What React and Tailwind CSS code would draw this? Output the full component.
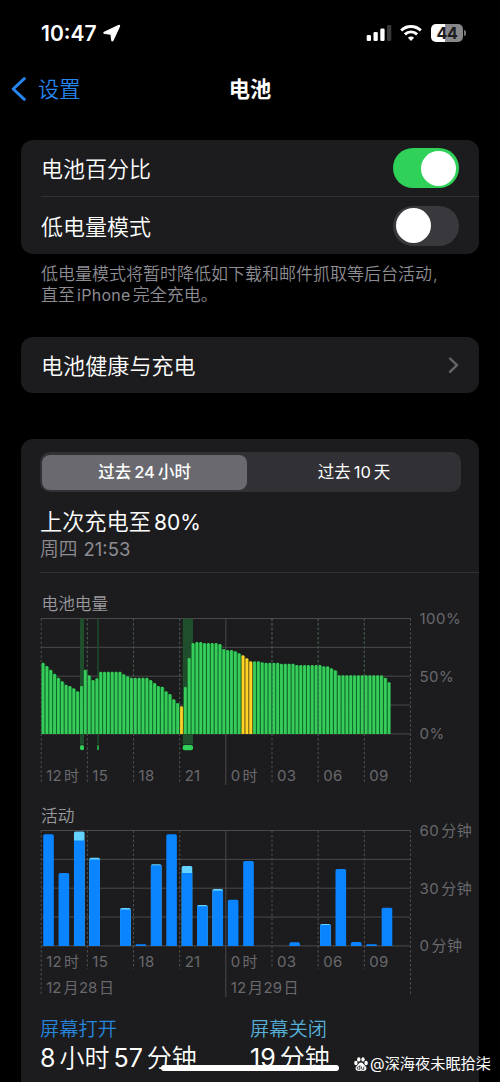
import React from "react";

const battery = [
  217, 227, 238, 250, 262, 273, 283, 287, 294, 303, 287, 238, 255, 269, 264, 244, 244, 244, 244, 244, 244, 252, 258,
  262, 262, 262, 262, 262, 269, 278, 287, 289, 303, 311, 327, 338, 348, 290, 203, 158, 155, 155, 158, 158, 158, 158,
  161, 176, 179, 179, 183, 189, 195, 204, 213, 213, 213, 216, 217, 217, 217, 217, 220, 220, 220, 220, 224, 224, 224,
  224, 224, 224, 224, 228, 228, 234, 240, 255, 255, 255, 255, 255, 255, 255, 255, 255, 255, 255, 255, 262, 276,
].map((v) => (431 - v) / 3);
const lowPower = [36, 52, 53, 54];

// [hour index, total height, height of the screen-off cap]
const activity = [
  [0, 111.7, 0], [1, 73, 0], [2, 114.5, 9], [3, 88.3, 1.8], [5, 38, 1.5], [6, 1.7, 0], [7, 81.7, 1], [8, 111.7, 0],
  [9, 80, 7], [10, 41, 1.2], [11, 57, 1.7], [12, 46.3, 0], [13, 85, 0], [16, 3.7, 0], [18, 22, 1], [19, 77, 0],
  [20, 4, 0], [21, 1.7, 0], [22, 38.3, 0],
];

const hours = ["12", "15", "18", "21", "0", "03", "06", "09"];
const STEP = 46.16;
const X0 = 20.2;

function Grid({ bottom, edge }) {
  return (
    <g>
      {[0, 1, 2, 3, 4].map((i) => (
        <line key={i} x1={X0} x2={X0 + 8 * STEP} y1={28.5 + i * 28.85} y2={28.5 + i * 28.85} stroke="#4a4a4c" strokeWidth="1" />
      ))}
      {[0, 1, 2, 3, 4, 5, 6, 7, 8].map((i) => (
        <line
          key={i}
          x1={X0 + i * STEP}
          x2={X0 + i * STEP}
          y1="28.5"
          y2={i === 4 ? edge + 2 : i % 8 === 0 ? edge : bottom}
          stroke={i === 4 ? "#4a4a4c" : "#525254"}
          strokeWidth="1"
          strokeDasharray={i === 4 ? undefined : "2.4 2.2"}
        />
      ))}
    </g>
  );
}

function Hours({ y }) {
  return hours.map((h, i) => (
    <text key={h} x={X0 + 5 + i * STEP} y={y} className="fill-[#69696d] text-[15px] font-normal tracking-[0.3px]">
      {h}
      {i % 4 === 0 && <tspan dx="2">时</tspan>}
    </text>
  ));
}

function BatteryChart() {
  return (
    <svg className="block h-[198px] w-[459px]" viewBox="0 0 459 198">
      <text x="20.5" y="19.5" className="fill-[#98989d] text-[16.7px]">电池电量</text>
      <Grid bottom={193} edge={193} />
      {[[59, 4], [76.3, 1.4], [161.7, 10.3]].map(([x, w]) => (
        <g key={x}>
          <rect x={x} y="28.5" width={w} height="126" fill="#1f4e2c" />
          <rect x={x} y="155" width={w} height="5.3" rx={Math.min(w / 2, 2)} fill="#30d158" />
        </g>
      ))}
      {battery.map((h, i) => {
        const low = lowPower.includes(i);
        return (
          <g key={i}>
            <rect x={20.5 + i * 3.846} y={144 - h + 1} width={i === 90 ? 2.5 : 3.9} height={h - 1} fill={low ? "#6e5a12" : "#0c6a29"} />
            <path
              d={`M${20.6 + i * 3.846} 144v${-h + 1}q0 -1 1 -1h.8q1 0 1 1v${h - 1}z`}
              fill={low ? "#ffd426" : "#38cd5b"}
            />
          </g>
        );
      })}
      {[1, 2, 3, 5, 6, 7].map((i) => (
        <line key={i} x1={X0 + i * STEP} x2={X0 + i * STEP} y1="28.5" y2="144" stroke="#3d5b45" strokeWidth="0.8" strokeDasharray="2.4 2.2" />
      ))}
      <Hours y={190.5} />
      {["100%", "50%", "0%"].map((t, i) => (
        <text key={t} x="398.5" y={34 + i * 57.7} className="fill-[#69696d] text-[15px] font-normal tracking-[0.5px]">{t}</text>
      ))}
    </svg>
  );
}

function ActivityChart() {
  return (
    <svg className="block h-[212px] w-[459px]" viewBox="0 0 459 212">
      <text x="20" y="19.5" className="fill-[#98989d] text-[16.7px]">活动</text>
      <g>
        <Grid bottom={167} edge={193} />
        {activity.map(([i, h, cap]) => {
          const x = 22.2 + i * 15.385;
          const r = Math.min(1.6, h / 2);
          return (
            <g key={i}>
              <path d={`M${x} 144v${-h + r}q0 ${-r} ${r} ${-r}h${10.6 - 2 * r}q${r} 0 ${r} ${r}v${h - r}z`} fill={cap ? "#64d2ff" : "#0a84ff"} />
              {cap > 0 && <rect x={x} y={144 - h + cap} width="10.6" height={h - cap} fill="#0a84ff" />}
            </g>
          );
        })}
      </g>
      <Hours y={165} />
      {["28", "29"].map((d, i) => (
        <text key={d} x={X0 + 5 + i * 4 * STEP} y="191" className="fill-[#69696d] text-[15px] font-normal">
          12<tspan dx="2">月</tspan><tspan dx="0.5">{d}</tspan><tspan dx="1.5">日</tspan>
        </text>
      ))}
      {["60", "30", "0"].map((t, i) => (
        <text key={t} x="398.5" y={34 + i * 57.7} className="fill-[#69696d] text-[15px] font-normal tracking-[0.5px]">
          {t}<tspan dx="2">分钟</tspan>
        </text>
      ))}
    </svg>
  );
}

function Switch({ on }) {
  return (
    <div className={on ? "flex h-10 w-[66px] items-center justify-end rounded-full bg-[#30d158] px-[3px]" : "flex h-10 w-[66px] items-center rounded-full bg-[#39393d] px-[3px]"}>
      <div className="size-[35px] rounded-full bg-white" />
    </div>
  );
}

export default function App() {
  return (
    <div className="relative h-[1082px] w-[500px] overflow-hidden bg-black font-['Inter','Noto_Sans_CJK_SC',sans-serif] font-[350] text-white">
      <header className="flex h-[66px] items-center pl-[41px] pr-[34px]">
        <span className="pt-px text-[21px] font-semibold">10:47</span>
        <svg className="ml-[6px] size-[18px]" viewBox="0 0 18 18">
          <path d="M1.300 8.200 15.500 1.500Q17 1 16.400 2.500L9.900 16.400Q9.100 17.600 8.800 16.100L8 10.200 1.600 9.500Q.2 9 1.300 8.200z" fill="#fff" stroke="#fff" strokeWidth="1.200" strokeLinejoin="round" />
        </svg>
        <svg className="ml-auto h-4 w-[26px]" viewBox="0 0 26 16">
          <rect x="0.700" y="10" width="4.300" height="6" rx="1.300" fill="#fff" />
          <rect x="7.500" y="7" width="4.300" height="9" rx="1.300" fill="#fff" />
          <rect x="14.300" y="3.500" width="4.300" height="12.500" rx="1.300" fill="#fff" />
          <rect x="21" y="0" width="4.300" height="16" rx="1.300" fill="#38383a" />
        </svg>
        <svg className="ml-[8px] h-4 w-[22px]" viewBox="0 0 22 16" fill="none" stroke="#fff" strokeWidth="2.900">
          <path d="M1.200 5.500C6.600.1 15.400.1 20.800 5.500" />
          <path d="M4.900 9.400c3.400-3.400 8.800-3.400 12.200 0" />
          <path d="M7.900 12.700c1.700-1.700 4.500-1.700 6.200 0L11 15.900z" fill="#fff" stroke="none" />
        </svg>
        <div className="ml-[9px] flex h-[18px] w-8 items-center justify-center rounded-[5px] bg-linear-to-r from-white from-44% to-[#88888a] to-44% text-[16px] font-bold leading-none tracking-[-0.3px] text-[#1c1c1e]">44</div>
        <div className="ml-px h-[6px] w-[2px] rounded-r-full bg-[#77777a]" />
      </header>

      <nav className="grid h-[46px] grid-cols-3 items-center px-[11px]">
        <div className="flex items-center gap-[12px] text-[21.2px] leading-none text-[#2685ee]">
          <svg className="h-6 w-[15px]" viewBox="0 0 15 24" fill="none" stroke="#2685ee" strokeWidth="3" strokeLinecap="round" strokeLinejoin="round">
            <path d="M13.300 1.700 2.200 12l11.100 10.300" />
          </svg>
          <span className="pt-[2px]">设置</span>
        </div>
        <h1 className="pt-[2px] text-center text-[21.2px] font-bold leading-none">电池</h1>
      </nav>

      <main className="pl-[21px] pr-[21px] pt-[28px]">
        <section className="h-[114px] rounded-xl bg-[#1c1c1e] text-[22px]">
          <div className="ml-[20px] flex h-[57px] items-center justify-between border-b border-[#303032] pr-5">
            <span className="pt-[3px]">电池百分比</span>
            <Switch on />
          </div>
          <div className="ml-[20px] flex h-[57px] items-center justify-between pr-5">
            <span className="pt-[3px]">低电量模式</span>
            <Switch />
          </div>
        </section>
        <p className="ml-[20px] mt-[10px] h-[73px] text-[17px] leading-[21px] text-[#8d8d93]">
          低电量模式将暂时降低如下载和邮件抓取等后台活动<span className="pl-px">,</span>
          <br />
          直至<span className="px-[2px] text-[16px] font-normal tracking-[0.3px]">iPhone</span>完全充电。
        </p>
        <section className="flex h-[56px] items-center justify-between rounded-xl bg-[#1c1c1e] pl-[20px] pr-[20px] text-[22.100px]">
          <span className="pt-[3px]">电池健康与充电</span>
          <svg className="h-4 w-[11px]" viewBox="0 0 11 16" fill="none" stroke="#66666a" strokeWidth="2.400" strokeLinecap="round" strokeLinejoin="round">
            <path d="m2 1.500 7 6.700-7 6.600" />
          </svg>
        </section>

        <section className="mt-[46px] h-[660px] rounded-t-xl bg-[#1c1c1e] pt-[13px]">
          <div className="ml-[19px] flex h-[40px] w-[421px] items-center rounded-[10px] bg-[#313135] p-[2px] text-[16.500px]">
            <div className="flex h-[35px] w-[205px] items-center justify-center rounded-lg bg-[#69696f] pt-px font-medium">
              过去<span className="px-[3px]">24</span>小时
            </div>
            <div className="flex flex-1 items-center justify-center pl-[2px] pt-px font-normal">
              过去<span className="px-[3px]">10</span>天
            </div>
          </div>
          <div className="ml-[19px] flex h-[81px] flex-col border-b border-[#303032] pt-[15px]">
            <div className="h-[29px] text-[22.200px] leading-[29px]">
              上次充电至<span className="pl-[3px] text-[21px] font-normal">80%</span>
            </div>
            <div className="h-[26px] text-[18.800px] leading-[26px] text-[#8d8d93]">
              周四<span className="pl-[6px] text-[18.500px] font-normal">21:53</span>
            </div>
          </div>
          <div className="pt-[17px]">
            <BatteryChart />
            <div className="mt-[14px]">
              <ActivityChart />
            </div>
          </div>
          <div className="ml-[19px] grid grid-cols-[210px_1fr] pt-[2px]">
            <div>
              <div className="h-[26px] text-[19.300px] leading-[26px] text-[#2685de]">屏幕打开</div>
              <div className="h-[32px] text-[25px] leading-[32px]">
                <span className="font-normal">8</span><span className="px-[4px]">小时</span><span className="font-normal">57</span><span className="pl-[4px]">分钟</span>
              </div>
            </div>
            <div>
              <div className="h-[26px] text-[19.300px] leading-[26px] text-[#55afd6]">屏幕关闭</div>
              <div className="h-[32px] text-[25px] leading-[32px]">
                <span className="font-normal">19</span><span className="pl-[4px]">分钟</span>
              </div>
            </div>
          </div>
        </section>
      </main>

      <div className="absolute left-[161px] top-[1065px] h-[6px] w-[178px] rounded-full bg-white" />
      <div className="absolute left-[354px] top-[1053px] flex h-[21px] items-center gap-[2px] text-[15.200px] font-normal leading-none">
        <svg className="size-[14px]" viewBox="0 0 14 14" fill="#fff">
          <ellipse cx="1.900" cy="6" rx="1.700" ry="2.200" />
          <ellipse cx="4.800" cy="2.400" rx="1.700" ry="2.200" />
          <ellipse cx="9" cy="2.400" rx="1.700" ry="2.200" />
          <ellipse cx="12.100" cy="6" rx="1.700" ry="2.200" />
          <path d="M7 5.500c1.700 0 2.600 1.700 3.800 2.900 1.300 1.300 2 2.300 1.500 3.800-.6 2-2.500 1.700-5.300 1.600-2.800.1-4.700.4-5.300-1.600-.5-1.500.2-2.500 1.500-3.800C4.400 7.200 5.300 5.500 7 5.500z" />
          <path d="M5.900 8.300v4h-1.500a1.200 1.200 0 0 1 0-2.500h1.500M7.500 9.600v1.900q0 .8.800.8h1.500V9.600" fill="none" stroke="#1c1c1e" strokeWidth=".8" />
        </svg>
        <span className="whitespace-nowrap">@深海夜未眠拾柒</span>
      </div>
    </div>
  );
}
